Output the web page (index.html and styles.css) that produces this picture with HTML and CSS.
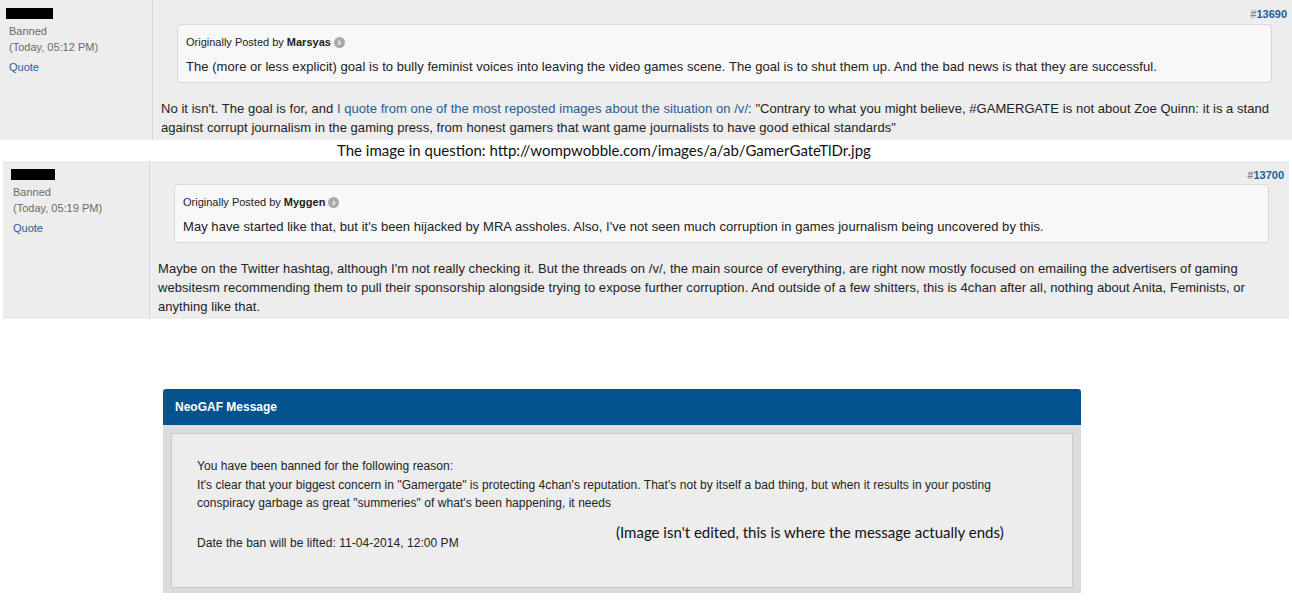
FILE: index.html
```html
<!DOCTYPE html>
<html lang="en">

<head>
    <meta charset="UTF-8">
    <title>NeoGAF - Banned</title>
    <link rel="stylesheet" href="styles.css">
</head>

<body>
    <div class="post post-first">
        <div class="post-user">
            <div class="redacted"></div>
            <div class="user-title">Banned</div>
            <div class="user-title">(Today, 05:12 PM)</div>
            <a class="quote-link" href="#">Quote</a>
        </div>
        <div class="post-body">
            <div class="post-number"><span class="hash">#</span><a href="#">13690</a></div>
            <div class="quote">
                <div class="quote-head">Originally Posted by <strong>Marsyas</strong> <span class="view-post">&#8250;</span></div>
                <div class="quote-text">The (more or less explicit) goal is to bully feminist voices into leaving the video games scene. The goal is to shut them up. And the bad news is that they are successful.</div>
            </div>
            <div class="post-text">No it isn't. The goal is for, and <a href="#">I quote from one of the most reposted images about the situation on /v/</a>: "Contrary to what you might believe, #GAMERGATE is not about Zoe Quinn: it is a stand against corrupt journalism in the gaming press, from honest gamers that want game journalists to have good ethical standards"</div>
        </div>
    </div>

    <div class="caption">The image in question: http://wompwobble.com/images/a/ab/GamerGateTlDr.jpg</div>

    <div class="post post-second">
        <div class="post-user">
            <div class="redacted"></div>
            <div class="user-title">Banned</div>
            <div class="user-title">(Today, 05:19 PM)</div>
            <a class="quote-link" href="#">Quote</a>
        </div>
        <div class="post-body">
            <div class="post-number"><span class="hash">#</span><a href="#">13700</a></div>
            <div class="quote">
                <div class="quote-head">Originally Posted by <strong>Myggen</strong> <span class="view-post">&#8250;</span></div>
                <div class="quote-text">May have started like that, but it's been hijacked by MRA assholes. Also, I've not seen much corruption in games journalism being uncovered by this.</div>
            </div>
            <div class="post-text">Maybe on the Twitter hashtag, although I'm not really checking it. But the threads on /v/, the main source of everything, are right now mostly focused on emailing the advertisers of gaming websitesm recommending them to pull their sponsorship alongside trying to expose further corruption. And outside of a few shitters, this is 4chan after all, nothing about Anita, Feminists, or anything like that.</div>
        </div>
    </div>

    <div class="message">
        <div class="message-head">NeoGAF Message</div>
        <div class="message-body">
            <div class="message-box">
                <p>You have been banned for the following reason:<br>It's clear that your biggest concern in "Gamergate" is protecting 4chan's reputation. That's not by itself a bad thing, but when it results in your posting conspiracy garbage as great "summeries" of what's been happening, it needs</p>
                <p class="ban-date">Date the ban will be lifted: 11-04-2014, 12:00 PM</p>
                <div class="note">(Image isn't edited, this is where the message actually ends)</div>
            </div>
        </div>
    </div>
</body>

</html>
```

FILE: styles.css
```css
* {
    box-sizing: border-box;
    margin: 0;
    padding: 0;
}

body {
    background-color: #ffffff;
    font-family: 'Liberation Sans', Arial, sans-serif;
    color: #222;
}

a {
    text-decoration: none;
}

.post {
    background-color: #ededed;
    display: grid;
}

.post-first {
    grid-template-columns: 153px 1fr;
}

.post-second {
    grid-template-columns: 147px 1fr;
    margin: 0 3px;
}

.post-user {
    border-right: 1px solid #d6d6d6;
    padding: 8px 6px;
    font-size: 11px;
    line-height: 16px;
}

.redacted {
    background-color: #000;
    height: 11px;
    margin-bottom: 4px;
}

.post-first .redacted {
    width: 47px;
}

.post-second .redacted {
    width: 44px;
    margin-left: 2px;
}

.user-title {
    color: #6b6b6b;
    padding-left: 3px;
}

.post-second .user-title,
.post-second .quote-link {
    padding-left: 4px;
}

.quote-link {
    display: block;
    color: #1d5c9c;
    padding-left: 3px;
    margin-top: 4px;
}

.post-body {
    padding: 7px 5px 3px 8px;
}

.post-number {
    text-align: right;
    font-size: 11px;
    line-height: 14px;
    font-weight: bold;
}

.post-number .hash {
    color: #8a8a8a;
}

.post-number a {
    color: #1d5c9c;
}

.quote {
    background-color: #f8f8f8;
    border: 1px solid #d7d7d7;
    border-radius: 4px;
    margin: 3px 15px 0 16px;
    padding: 10px 8px 6px;
}

.post-second .quote {
    margin-top: 2px;
}

.quote-head {
    font-size: 11px;
    line-height: 14px;
    display: flex;
    align-items: center;
    gap: 3px;
}

.view-post {
    display: inline-flex;
    align-items: center;
    justify-content: center;
    width: 11px;
    height: 11px;
    border-radius: 50%;
    background-color: #a9a9a9;
    color: #fff;
    font-size: 11px;
    line-height: 11px;
    font-weight: bold;
}

.quote-text {
    font-size: 13px;
    line-height: 18px;
    letter-spacing: 0.05px;
    margin-top: 9px;
}

.post-text {
    font-size: 13px;
    line-height: 19px;
    letter-spacing: 0.05px;
    margin-top: 16px;
}

.post-text a {
    color: #275b95;
}

.caption {
    font-family: Lato, 'Open Sans', sans-serif;
    font-size: 15px;
    line-height: 21px;
    color: #111;
    padding-left: 337px;
}

.message {
    width: 918px;
    margin: 70px 0 0 163px;
}

.message-head {
    background-color: #03538f;
    color: #fff;
    font-size: 12px;
    font-weight: bold;
    line-height: 36px;
    padding-left: 12px;
    border-radius: 3px 3px 0 0;
}

.message-body {
    background-color: #dcdcdc;
    padding: 8px 8px 5px;
}

.message-box {
    position: relative;
    background-color: #ededed;
    border: 1px solid #c9c9c9;
    padding: 23px 60px 34px 25px;
    font-size: 12px;
    line-height: 18.5px;
    letter-spacing: 0.05px;
}

.ban-date {
    margin-top: 21.5px;
}

.note {
    position: absolute;
    left: 444px;
    top: 88px;
    font-family: Lato, 'Open Sans', sans-serif;
    font-size: 15px;
    line-height: 20px;
    letter-spacing: 0;
    color: #111;
}
```
